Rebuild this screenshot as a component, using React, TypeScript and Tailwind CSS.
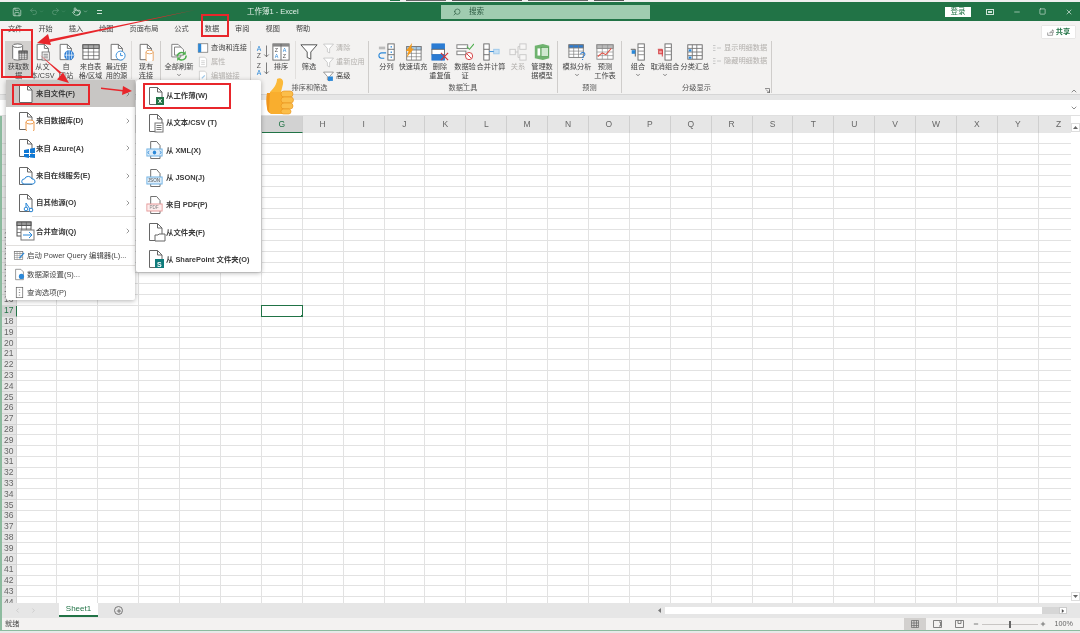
import type { ReactNode } from "react";
import { ChevronDown, ChevronRight, ChevronUp, Minus, Plus, Pointer, Redo2, Save, Search, Square, Undo2, X } from "lucide-react";

const Ico = ({ s = 20, children }: { s?: number; children: ReactNode }) => (
  <svg width={s} height={s} viewBox="0 0 20 20" className="shrink-0">
    {children}
  </svg>
);

const Page = () => (
  <>
    <path d="M3.5 1.5h8l4.5 4.5v12.5h-12.5z" fill="#fff" stroke="#666" />
    <path d="M11.5 1.5v4.5h4.5" fill="none" stroke="#666" />
  </>
);

const Can = ({ c = "#666", x = 4, y = 2, w = 11, h = 14 }) => (
  <>
    <path d={`M${x} ${y + 2}v${h}a${w / 2} 2 0 0 0 ${w} 0v-${h}`} fill="#fff" stroke={c} />
    <ellipse cx={x + w / 2} cy={y + 2} rx={w / 2} ry={2} fill="#fff" stroke={c} />
  </>
);

const MiniGrid = ({ x, y, w, h, c = "#666", head = "#fff" }: { x: number; y: number; w: number; h: number; c?: string; head?: string }) => (
  <>
    <rect x={x} y={y} width={w} height={h} fill="#fff" stroke={c} />
    <rect x={x} y={y} width={w} height={h / 4} fill={head} stroke={c} />
    <path d={`M${x + w / 3} ${y}v${h}M${x + (2 * w) / 3} ${y}v${h}M${x} ${y + h / 2}h${w}M${x} ${y + (3 * h) / 4}h${w}`} stroke={c} fill="none" strokeWidth=".7" />
  </>
);

const icons: Record<string, ReactNode> = {
  blank: <Page />,
  getData: (
    <>
      <Can x={3} y={1} w={11} h={14} />
      <MiniGrid x={10} y={9} w={9} h={9} c="#555" head="#888" />
    </>
  ),
  csv: (
    <>
      <Page />
      <rect x="9" y="10" width="8" height="9" fill="#fff" stroke="#777" />
      <path d="M10.5 12.5h5M10.5 14.5h5M10.5 16.5h5" stroke="#777" />
    </>
  ),
  web: (
    <>
      <Page />
      <circle cx="13.5" cy="13.5" r="5.5" fill="#2b7cd3" />
      <path d="M8 13.5h11M13.5 8v11M11 9.5q-1 4 0 8M16 9.5q1 4 0 8" stroke="#fff" strokeWidth=".8" fill="none" />
    </>
  ),
  table: <MiniGrid x={1} y={2} w={18} h={16} c="#555" head="#aaa" />,
  recent: (
    <>
      <Page />
      <circle cx="14" cy="14" r="5" fill="#fff" stroke="#2b88d8" />
      <path d="M14 11v3h2.5" stroke="#2b88d8" fill="none" />
    </>
  ),
  existing: (
    <>
      <Page />
      <Can c="#e8a15f" x={10} y={8} w={8} h={9} />
    </>
  ),
  refresh: (
    <>
      <path d="M2 1.5h7l3 3v11H2z" fill="#fff" stroke="#777" />
      <path d="M5 4.5h7l3 3v6H5z" fill="#fff" stroke="#777" />
      <path d="M8 15a5 5 0 0 1 8.5-3M18 14a5 5 0 0 1-8.5 3.5" fill="none" stroke="#4cae4c" strokeWidth="1.6" />
      <path d="M17.5 9v4h-4zM8 20v-4h4z" fill="#4cae4c" />
    </>
  ),
  sortBox: (
    <>
      <rect x="1" y="1" width="18" height="18" fill="#fff" stroke="#666" />
      <rect x="1" y="1" width="18" height="3" fill="#888" />
      <path d="M10 1v18" stroke="#666" />
      <text x="3" y="10" fontSize="6" fill="#555" fontFamily="Liberation Sans">Z</text>
      <text x="3" y="17" fontSize="6" fill="#2b88d8" fontFamily="Liberation Sans">A</text>
      <text x="12" y="10" fontSize="6" fill="#2b88d8" fontFamily="Liberation Sans">A</text>
      <text x="12" y="17" fontSize="6" fill="#555" fontFamily="Liberation Sans">Z</text>
    </>
  ),
  filter: <path d="M1 2h18l-7 8v8l-4-2v-6z" fill="#fff" stroke="#555" strokeWidth="1.1" />,
  split: (
    <>
      <rect x="1" y="4" width="7" height="3" fill="#bbb" />
      <rect x="11" y="1" width="7" height="18" fill="#fff" stroke="#666" />
      <path d="M11 7h7M11 13h7" stroke="#666" />
      <rect x="14" y="3.5" width="1.5" height="1.5" fill="#2b88d8" />
      <rect x="14" y="9.5" width="1.5" height="1.5" fill="#2b88d8" />
      <rect x="14" y="15" width="1.5" height="1.5" fill="#2b88d8" />
      <path d="M9 11H4a3 3 0 0 0 0 6h3" fill="none" stroke="#2b88d8" strokeWidth="1.2" />
    </>
  ),
  flash: (
    <>
      <MiniGrid x={3} y={4} w={16} h={15} c="#777" head="#a7cdec" />
      <path d="M9 0L2 9h3l-2 7 8-10H8z" fill="#f39c1f" />
    </>
  ),
  dedupe: (
    <>
      <rect x="1" y="1" width="14" height="6" fill="#2b7cd3" stroke="#2b7cd3" />
      <rect x="1" y="7" width="14" height="6" fill="#fff" stroke="#666" />
      <rect x="1" y="13" width="14" height="6" fill="#2b7cd3" stroke="#2b7cd3" />
      <path d="M11 11l8 8M19 11l-8 8" stroke="#d13438" strokeWidth="1.3" />
    </>
  ),
  validate: (
    <>
      <rect x="1" y="2" width="12" height="4" fill="#fff" stroke="#777" />
      <rect x="1" y="9" width="10" height="4" fill="#fff" stroke="#777" />
      <path d="M12 4l3 3 5-6" fill="none" stroke="#4cae4c" strokeWidth="1.2" />
      <circle cx="14.5" cy="14.5" r="4" fill="#fff" stroke="#d13438" />
      <path d="M12 12l5 5" stroke="#d13438" />
    </>
  ),
  merge: (
    <>
      <rect x="2" y="1" width="6" height="18" fill="#fff" stroke="#666" />
      <path d="M2 7h6M2 13h6" stroke="#666" />
      <rect x="13" y="7" width="6" height="5" fill="#c7e0f4" stroke="#9cc8ea" />
      <path d="M8 9.5h5" stroke="#2b88d8" />
    </>
  ),
  relation: (
    <g opacity=".35">
      <rect x="1" y="7" width="6" height="6" fill="#fff" stroke="#777" />
      <rect x="12" y="1" width="7" height="6" fill="#fff" stroke="#777" />
      <rect x="12" y="13" width="7" height="6" fill="#fff" stroke="#777" />
      <path d="M7 10h3M10 4h2M10 16h2M10 4v12" stroke="#777" fill="none" />
    </g>
  ),
  model: (
    <>
      <path d="M2 3l9-2 7 2v14l-7 2-9-2z" fill="#6fb36f" />
      <rect x="9" y="5" width="8" height="10" fill="#cfe8cf" stroke="#3f8f3f" strokeWidth=".6" />
      <path d="M5 6h3v8H5z" fill="#fff" />
    </>
  ),
  whatIf: (
    <>
      <MiniGrid x={1} y={2} w={16} h={14} c="#777" head="#2b7cd3" />
      <text x="13" y="19" fontSize="12" fill="#2b7cd3" fontFamily="Liberation Sans">?</text>
    </>
  ),
  forecast: (
    <>
      <MiniGrid x={1} y={2} w={18} h={16} c="#888" head="#bbb" />
      <path d="M2 15l5-4 4 2 6-7" fill="none" stroke="#e0564a" strokeWidth="1.2" />
    </>
  ),
  group: (
    <>
      <rect x="10" y="1" width="7" height="18" fill="#fff" stroke="#666" />
      <path d="M10 5h7M10 9h7M10 13h7" stroke="#888" />
      <path d="M2 7h5v8" fill="none" stroke="#555" />
      <rect x="3" y="8" width="4" height="4" fill="#2b88d8" />
    </>
  ),
  ungroup: (
    <>
      <rect x="10" y="1" width="7" height="18" fill="#fff" stroke="#666" />
      <path d="M10 5h7M10 9h7M10 13h7" stroke="#888" />
      <path d="M2 7h5v8" fill="none" stroke="#d13438" />
      <rect x="3" y="8" width="4" height="4" fill="#f2a3a3" stroke="#d13438" />
    </>
  ),
  subtotal: (
    <>
      <rect x="2" y="2" width="16" height="16" fill="#fff" stroke="#666" />
      <path d="M7 2v16M12 2v16M2 6h16M2 10h16M2 14h16" stroke="#777" />
      <rect x="3" y="7" width="3" height="2.5" fill="#2b88d8" />
      <rect x="3" y="15" width="3" height="2.5" fill="#2b88d8" />
    </>
  ),
  db: (
    <>
      <Page />
      <Can c="#ed9b4f" x={10} y={9} w={8} h={8} />
    </>
  ),
  azure: (
    <>
      <Page />
      <path d="M8 12l5-1v4H8zM14 10.8l5-1V15h-5zM8 16h5v4l-5-1zM14 16h5v4l-5-.5z" fill="#0f78d4" />
    </>
  ),
  online: (
    <>
      <Page />
      <path d="M8 18a2.5 2.5 0 0 1 .5-5 4 4 0 0 1 7.5 0 2.5 2.5 0 0 1 1 5z" fill="#fff" stroke="#2b88d8" />
    </>
  ),
  other: (
    <>
      <Page />
      <circle cx="10" cy="16" r="1.8" fill="#fff" stroke="#2b88d8" />
      <circle cx="15" cy="17" r="1.8" fill="#fff" stroke="#2b88d8" />
      <path d="M10 14v-4l4 6" fill="none" stroke="#2b88d8" />
    </>
  ),
  merged: (
    <>
      <MiniGrid x={1} y={1} w={14} h={14} c="#555" head="#999" />
      <rect x="5" y="9" width="13" height="10" fill="#fff" stroke="#777" />
      <path d="M7 14h9M13 11l3 3-3 3" fill="none" stroke="#2b88d8" />
    </>
  ),
  excel: (
    <>
      <Page />
      <rect x="10" y="11" width="8" height="8" fill="#217346" />
      <path d="M12.5 13l3 4M15.5 13l-3 4" stroke="#fff" />
    </>
  ),
  xml: (
    <g transform="translate(0 0) scale(.85 1)">
      <path d="M5.500 9V1.500h7l4 4V9M5.500 16v2.500h11V16" fill="#fff" stroke="#666" />
      <rect x="1" y="9" width="18" height="7" fill="#dcecf9" stroke="#6fb1e4" />
      <path d="M4 11l-2 1.500L4 14M16 11l2 1.500L16 14" fill="none" stroke="#2b88d8" />
      <circle cx="10" cy="12.500" r="2" fill="#2b88d8" />
    </g>
  ),
  json: (
    <g transform="translate(0 0) scale(.85 1)">
      <path d="M5.500 9V1.500h7l4 4V9M5.500 16v2.500h11V16" fill="#fff" stroke="#666" />
      <rect x="1" y="9" width="18" height="7" fill="#dcecf9" stroke="#6fb1e4" />
      <text x="2" y="14.500" fontSize="5.500" fill="#555" fontFamily="Liberation Sans">JSON</text>
    </g>
  ),
  pdf: (
    <g transform="translate(0 0) scale(.85 1)">
      <path d="M5.500 9V1.500h7l4 4V9M5.500 16v2.500h11V16" fill="#fff" stroke="#666" />
      <rect x="1" y="9" width="18" height="7" fill="#fdecec" stroke="#e69a9a" />
      <text x="4" y="14.500" fontSize="5.500" fill="#888" fontFamily="Liberation Sans">PDF</text>
    </g>
  ),
  folder: (
    <>
      <Page />
      <path d="M9 13h3l1-1h6v7H9z" fill="#fff" stroke="#666" />
    </>
  ),
  sharepoint: (
    <>
      <Page />
      <rect x="9" y="10" width="9" height="9" fill="#0f7b7b" />
      <text x="11" y="17.5" fontSize="7" fontWeight="bold" fill="#fff" fontFamily="Liberation Sans">S</text>
    </>
  ),
};

const RibbonBtn = ({ icon, lines, w, caret, off }: { icon: string; lines: string[]; w: string; caret?: boolean; off?: boolean }) => (
  <div className={`${w} flex flex-col items-center pt-[2px] shrink-0 ${off ? "text-[#b3b0ad]" : ""}`}>
    <Ico s={18}>{icons[icon]}</Ico>
    <div className="mt-[1px] flex flex-col items-center leading-[9px] whitespace-nowrap">
      {lines.map((l) => (
        <span key={l}>{l}</span>
      ))}
      {caret && <ChevronDown className="w-[6px] h-[6px] mt-[1px]" strokeWidth={2.5} />}
    </div>
  </div>
);

const SmallRow = ({ children, off }: { children: ReactNode; off?: boolean }) => (
  <div className={`h-[14px] flex items-center gap-[2px] whitespace-nowrap ${off ? "text-[#b3b0ad]" : ""}`}>{children}</div>
);

const Group = ({ w, label, children }: { w: string; label: string; children: ReactNode }) => (
  <div className={`${w} shrink-0 h-[52px] mt-[1px] flex flex-col border-r border-[#cfcdcb]`}>
    <div className="flex h-[42px] shrink-0">{children}</div>
    <div className="text-center leading-[10px] text-[#555]">{label}</div>
  </div>
);

const Ribbon = () => (
  <div className="h-[54px] bg-[#f3f2f1] flex text-[7.2px] text-[#444] relative">
    <Group w="w-[161px]" label="获取和转换数据">
      <div className="w-[5px] shrink-0" />
      <RibbonBtn icon="getData" w="w-[27px] h-[37px] bg-[#d2d0ce]" lines={["获取数", "据"]} caret />
      <RibbonBtn icon="csv" w="w-[21px]" lines={["从文", "本/CSV"]} />
      <RibbonBtn icon="web" w="w-[26px]" lines={["自", "网站"]} />
      <RibbonBtn icon="table" w="w-[23px]" lines={["来自表", "格/区域"]} />
      <RibbonBtn icon="recent" w="w-[29px]" lines={["最近使", "用的源"]} />
      <div className="w-px h-[38px] bg-[#dddbd9] shrink-0" />
      <RibbonBtn icon="existing" w="w-[28px]" lines={["现有", "连接"]} />
    </Group>
    <Group w="w-[90px]" label="查询和连接">
      <RibbonBtn icon="refresh" w="w-[36px]" lines={["全部刷新"]} caret />
      <div className="flex flex-col">
        <SmallRow>
          <Ico s={12}>
            <rect x="2" y="3" width="16" height="14" fill="#fff" stroke="#555" />
            <rect x="2" y="3" width="5" height="14" fill="#2b88d8" />
          </Ico>
          查询和连接
        </SmallRow>
        <SmallRow off>
          <Ico s={12}>
            <path d="M4 2h9l3 3v13H4z" fill="#fff" stroke="#bbb" />
            <path d="M7 8h6M7 11h6M7 14h6" stroke="#bbb" />
          </Ico>
          属性
        </SmallRow>
        <SmallRow off>
          <Ico s={12}>
            <path d="M4 2h9l3 3v13H4z" fill="#fff" stroke="#bbb" />
            <path d="M8 14l5-5" stroke="#9cc8ea" strokeWidth="2" />
          </Ico>
          编辑链接
        </SmallRow>
      </div>
    </Group>
    <Group w="w-[118px]" label="排序和筛选">
      <div className="w-[14px] ml-[5px] shrink-0 flex flex-col gap-[2px] pt-[3px]">
        <Ico s={15}>
          <text x="1" y="9" fontSize="9" fill="#2b88d8" fontFamily="Liberation Sans">A</text>
          <text x="1" y="18" fontSize="9" fill="#555" fontFamily="Liberation Sans">Z</text>
          <path d="M14 2v15M11 14l3 3 3-3" fill="none" stroke="#555" />
        </Ico>
        <Ico s={15}>
          <text x="1" y="9" fontSize="9" fill="#555" fontFamily="Liberation Sans">Z</text>
          <text x="1" y="18" fontSize="9" fill="#2b88d8" fontFamily="Liberation Sans">A</text>
          <path d="M14 2v15M11 14l3 3 3-3" fill="none" stroke="#555" />
        </Ico>
      </div>
      <RibbonBtn icon="sortBox" w="w-[22px]" lines={["排序"]} />
      <div className="w-[4px] shrink-0 border-r border-[#e1dfdd] h-[38px]" />
      <RibbonBtn icon="filter" w="w-[26px]" lines={["筛选"]} />
      <div className="flex flex-col ml-[1px]">
        <SmallRow off>
          <Ico s={11}>
            <path d="M1 2h18l-7 8v8l-4-2v-6z" fill="#fff" stroke="#aaa" />
          </Ico>
          清除
        </SmallRow>
        <SmallRow off>
          <Ico s={11}>
            <path d="M1 2h18l-7 8v8l-4-2v-6z" fill="#fff" stroke="#aaa" />
          </Ico>
          重新应用
        </SmallRow>
        <SmallRow>
          <Ico s={11}>
            <path d="M1 2h18l-7 8v8l-4-2v-6z" fill="#fff" stroke="#555" />
            <rect x="9" y="10" width="9" height="8" fill="#2b88d8" />
          </Ico>
          高级
        </SmallRow>
      </div>
    </Group>
    <Group w="w-[189px]" label="数据工具">
      <div className="w-[3px] shrink-0" />
      <RibbonBtn icon="split" w="w-[29px]" lines={["分列"]} />
      <RibbonBtn icon="flash" w="w-[24px]" lines={["快速填充"]} />
      <RibbonBtn icon="dedupe" w="w-[30px]" lines={["删除", "重复值"]} />
      <RibbonBtn icon="validate" w="w-[20px]" lines={["数据验", "证"]} caret />
      <RibbonBtn icon="merge" w="w-[32px]" lines={["合并计算"]} />
      <RibbonBtn icon="relation" w="w-[22px]" lines={["关系"]} off />
      <RibbonBtn icon="model" w="w-[26px]" lines={["管理数", "据模型"]} />
    </Group>
    <Group w="w-[64px]" label="预测">
      <div className="w-[3px] shrink-0" />
      <RibbonBtn icon="whatIf" w="w-[32px]" lines={["模拟分析"]} caret />
      <RibbonBtn icon="forecast" w="w-[24px]" lines={["预测", "工作表"]} />
    </Group>
    <Group w="w-[150px]" label="分级显示">
      <div className="w-[3px] shrink-0" />
      <RibbonBtn icon="group" w="w-[26px]" lines={["组合"]} caret />
      <RibbonBtn icon="ungroup" w="w-[28px]" lines={["取消组合"]} caret />
      <RibbonBtn icon="subtotal" w="w-[32px]" lines={["分类汇总"]} />
      <div className="flex flex-col text-[#c4c2c0] ml-[1px]">
        <SmallRow off>
          <Ico s={10}>
            <path d="M2 5h5M2 10h5M2 15h5M10 10h8" stroke="#bbb" strokeWidth="1.5" />
          </Ico>
          显示明细数据
        </SmallRow>
        <div className="-mt-px">
          <SmallRow off>
            <Ico s={10}>
              <path d="M2 5h5M2 10h5M2 15h5M10 10h8" stroke="#bbb" strokeWidth="1.5" />
            </Ico>
            隐藏明细数据
          </SmallRow>
        </div>
      </div>
    </Group>
    <svg width="5" height="5" viewBox="0 0 5 5" className="absolute left-[765px] top-[48px]">
      <path d="M0 .5h4.500v4.500M1 1.500l3 3M2 4.500h2.500v-2.500" fill="none" stroke="#666" strokeWidth=".7" />
    </svg>
    <ChevronUp className="absolute left-[1070px] top-[47px] w-[8px] h-[8px] text-[#555]" />
  </div>
);

const MenuRow = ({ icon, label, active, arrow }: { icon: string; label: string; active?: boolean; arrow?: boolean }) => (
  <div className={`h-[27.3px] flex items-center pl-[10px] pr-[3px] ${active ? "bg-[#c8c6c4]" : ""}`}>
    <div className="w-[20px] shrink-0">
      <Ico s={20}>{icons[icon]}</Ico>
    </div>
    <span className="font-bold text-[#3a3a3a] whitespace-nowrap">{label}</span>
    {arrow && <ChevronRight className="ml-auto w-[8px] h-[8px] text-[#666]" />}
  </div>
);

const FootRow = ({ icon, label }: { icon: ReactNode; label: string }) => (
  <div className="flex items-center gap-[1px] pl-[7px] h-[18px] whitespace-nowrap text-[#444]">
    <Ico s={13}>{icon}</Ico>
    {label}
  </div>
);

const SourceMenu = () => (
  <div className="absolute left-[6px] top-[80px] w-[129px] h-[220px] bg-white rounded-[2px] shadow-[0_1px_5px_rgba(0,0,0,0.3)] text-[7.4px]">
    <MenuRow icon="blank" label="来自文件(F)" active arrow />
    <MenuRow icon="db" label="来自数据库(D)" arrow />
    <MenuRow icon="azure" label="来自 Azure(A)" arrow />
    <MenuRow icon="online" label="来自在线服务(E)" arrow />
    <MenuRow icon="other" label="自其他源(O)" arrow />
    <div className="h-px bg-[#e1dfdd] ml-[26px]" />
    <MenuRow icon="merged" label="合并查询(Q)" arrow />
    <div className="h-px bg-[#e1dfdd] mb-[1px]" />
    <FootRow
      label="启动 Power Query 编辑器(L)..."
      icon={
        <>
          <MiniGrid x={2} y={4} w={13} h={12} c="#777" />
          <path d="M10 14l7-8" stroke="#2b88d8" strokeWidth="2" />
        </>
      }
    />
    <div className="h-px bg-[#e1dfdd]" />
    <FootRow
      label="数据源设置(S)..."
      icon={
        <>
          <path d="M4 2h8l4 4v12H4z" fill="#fff" stroke="#666" />
          <circle cx="13" cy="13" r="4" fill="#2b88d8" />
        </>
      }
    />
    <FootRow
      label="查询选项(P)"
      icon={
        <>
          <rect x="5" y="2" width="10" height="16" fill="#fff" stroke="#555" />
          <path d="M9 6h2M9 10h2M9 14h2" stroke="#555" />
        </>
      }
    />
  </div>
);

const FileMenu = () => (
  <div className="absolute left-[136px] top-[80px] w-[125px] h-[192px] pt-[2px] bg-white rounded-[2px] shadow-[0_1px_5px_rgba(0,0,0,0.3)] text-[7.4px]">
    <MenuRow icon="excel" label="从工作薄(W)" />
    <MenuRow icon="csv" label="从文本/CSV (T)" />
    <MenuRow icon="xml" label="从 XML(X)" />
    <MenuRow icon="json" label="从 JSON(J)" />
    <MenuRow icon="pdf" label="来自 PDF(P)" />
    <MenuRow icon="folder" label="从文件夹(F)" />
    <MenuRow icon="sharepoint" label="从 SharePoint 文件夹(O)" />
  </div>
);

const COLS = "ABCDEFGHIJKLMNOPQRSTUVWXYZ".split("");
const ROWS = Array.from({ length: 44 }, (_, i) => i + 1);

const Row = ({ r }: { r: number }) => (
  <>
    <div
      className={`flex items-center justify-center border-b border-r border-[#d4d4d4] ${
        r === 17 ? "bg-[#d2d2d2] text-[#217346] border-r-[#217346]" : "bg-[#e6e6e6]"
      }`}
    >
      {r}
    </div>
    {COLS.map((c) => (
      <div key={c} className="relative bg-white border-r border-b border-[#e2e2e2]">
        {r === 17 && c === "G" && (
          <div className="absolute -left-px -top-px -right-px -bottom-px border border-[#217346]">
            <div className="absolute -right-[2px] -bottom-[2px] w-[3px] h-[3px] bg-[#217346]" />
          </div>
        )}
      </div>
    ))}
  </>
);

const Sheet = () => (
  <div className="flex-1 min-h-0 flex border-l-2 border-[#8dbb9f] overflow-hidden">
    <div className="w-[1069px] shrink-0 overflow-hidden">
      <div className="grid grid-cols-[14.5px_repeat(26,40.9px)] grid-rows-[17px] auto-rows-[10.8px] text-[8.5px] text-[#666]">
        <div className="bg-[#e6e6e6] border-r border-[#cfcfcf]" />
        {COLS.map((c) => (
          <div
            key={c}
            className={`flex items-center justify-center border-r border-[#cfcfcf] ${
              c === "G" ? "bg-[#d2d2d2] border-b border-b-[#217346] text-[#217346]" : "bg-[#e6e6e6]"
            }`}
          >
            {c}
          </div>
        ))}
        {ROWS.map((r) => (
          <Row key={r} r={r} />
        ))}
      </div>
    </div>
    <div className="flex-1 bg-white flex flex-col items-stretch pt-[7px] pb-[2px] text-[#666]">
      <div className="h-[9px] flex items-center justify-center border border-[#ddd]">
        <svg width="5" height="3" viewBox="0 0 5 3"><path d="M2.500 0l2.500 3H0z" fill="#666" /></svg>
      </div>
      <div className="flex-1" />
      <div className="h-[9px] flex items-center justify-center border border-[#ddd]">
        <svg width="5" height="3" viewBox="0 0 5 3"><path d="M0 0h5L2.500 3z" fill="#666" /></svg>
      </div>
    </div>
  </div>
);

const Annotations = () => (
  <>
    <div className="absolute left-[1px] top-[29px] w-[32px] h-[49px] border-2 border-[#e8262b]" />
    <div className="absolute left-[201px] top-[14px] w-[28px] h-[23px] border-2 border-[#e8262b]" />
    <div className="absolute left-[12px] top-[84px] w-[78px] h-[21px] border-2 border-[#e8262b]" />
    <div className="absolute left-[143px] top-[83px] w-[88px] h-[26px] border-2 border-[#e8262b]" />
    <svg width="300" height="120" viewBox="0 0 300 120" className="absolute left-0 top-0 pointer-events-none">
      <path d="M195 10L49 39.500l1 2.500z" fill="#e8262b" />
      <path d="M37 43l11-9 3 11z" fill="#e8262b" />
      <path d="M40 55l20 19 1.500-1.500z" fill="#e8262b" />
      <path d="M69 83l-12-3.500 6-7z" fill="#e8262b" />
      <path d="M101 87.500v1.500l22 2.500v-1.500z" fill="#e8262b" />
      <path d="M132 91l-10 4 1-9z" fill="#e8262b" />
    </svg>
    <svg width="34" height="38" viewBox="0 0 34 38" className="absolute left-[264px] top-[77px] pointer-events-none">
      <path d="M13 2c3-2 7 0 6 5l-2 8H6C10 11 13 7 13 2z" fill="#fbb93a" />
      <path d="M3 16h6c-2 6-2 14 1 21-4 0-7-2-7-6-1-5-1-11 0-15z" fill="#f0961c" />
      <path d="M6 15h14v22H9c-3 0-4-2-4-5z" fill="#f9ae2e" />
      <rect x="17" y="14" width="12" height="6" rx="3" fill="#fbbe4a" stroke="#e8911a" strokeWidth=".6" />
      <rect x="17" y="20" width="12.500" height="6" rx="3" fill="#fbbe4a" stroke="#e8911a" strokeWidth=".6" />
      <rect x="17" y="26" width="12" height="6" rx="3" fill="#fbbe4a" stroke="#e8911a" strokeWidth=".6" />
      <rect x="17" y="32" width="10" height="5" rx="2.500" fill="#fbbe4a" stroke="#e8911a" strokeWidth=".6" />
    </svg>
  </>
);

export default function App() {
  return (
    <div className="relative w-[1080px] h-[633px] overflow-hidden flex flex-col bg-white blur-[0.5px] font-['Liberation_Sans','Noto_Sans_CJK_SC',sans-serif]">
      {/* sliver of the page above the window */}
      <div className="h-[2px] bg-[#efefef] flex items-start pl-[390px] gap-[6px]">
        <span className="w-[10px] h-[1px] bg-[#217346]" />
        <span className="w-[40px] h-[1px] bg-[#666]" />
        <span className="w-[70px] h-[1px] bg-[#555]" />
        <span className="w-[60px] h-[1px] bg-[#666]" />
        <span className="w-[30px] h-[1px] bg-[#555]" />
      </div>

      {/* title bar */}
      <div className="h-[19px] bg-[#217346] flex items-center text-[7.5px] text-[#e4f0e9]">
        <div className="w-[247px] shrink-0 flex items-center pl-[12px]">
          <Save className="w-[10px] h-[10px] text-[#cfe3d7]" strokeWidth={1.6} />
          <Undo2 className="w-[9px] h-[9px] ml-[7px] text-[#5f9c7b]" />
          <ChevronDown className="w-[5px] h-[5px] ml-[1px] text-[#5f9c7b]" />
          <Redo2 className="w-[9px] h-[9px] ml-[7px] text-[#5f9c7b]" />
          <ChevronDown className="w-[5px] h-[5px] ml-[1px] text-[#5f9c7b]" />
          <Pointer className="w-[9px] h-[9px] ml-[6px] text-[#cfe3d7]" />
          <ChevronDown className="w-[5px] h-[5px] ml-[2px] text-[#cfe3d7]" />
          <span className="w-[5px] h-[4px] ml-[9px] border-y border-[#cfe3d7]" />
        </div>
        <div className="w-[194px] shrink-0">工作薄1 - Excel</div>
        <div className="w-[209px] shrink-0 h-[14px] bg-[#a0ccb0] flex items-center pl-[12px] gap-[8px] text-[#2d5c43]">
          <Search className="w-[8px] h-[8px] -scale-x-100" />
          搜索
        </div>
        <div className="flex-1" />
        <div className="w-[26px] h-[10px] bg-white text-[#217346] flex items-center justify-center mr-[15px]">登录</div>
        <div className="w-[8px] h-[6px] border border-[#cfe3d7] flex items-center justify-center mr-[19px]">
          <span className="w-[4px] h-[2px] bg-[#cfe3d7]" />
        </div>
        <Minus className="w-[8px] h-[8px] text-[#cfe3d7] mr-[18px]" />
        <Square className="w-[7px] h-[7px] text-[#e4f0e9] mr-[19px]" />
        <X className="w-[8px] h-[8px] text-[#e4f0e9] mr-[7px]" />
      </div>

      {/* tabs */}
      <div className="h-[19px] bg-[#f3f2f1] flex items-center justify-between text-[7.2px] text-[#444] pl-[8px] pr-[5px]">
        <div className="flex gap-[16px] pb-[3px]">
          {["文件", "开始", "插入", "绘图", "页面布局", "公式", "数据", "审阅", "视图", "帮助"].map((t) => (
            <span key={t}>{t}</span>
          ))}
        </div>
        <div className="w-[33px] h-[12px] mt-[3px] bg-white flex items-center justify-center gap-[2px] text-[#217346] font-bold shadow-[0_0_1px_rgba(0,0,0,0.25)]">
          <svg width="7" height="7" viewBox="0 0 10 10"><path d="M1 5v4h7V6M4 6c0-2 2-3 4-3V1l2 3-2 2V5C6 5 5 5 4 6z" fill="none" stroke="#777" /></svg>
          共享
        </div>
      </div>

      <Ribbon />
      <div className="h-[6px] bg-[#e6e6e6] border-t border-[#d6d6d6]" />

      {/* formula bar */}
      <div className="h-[16px] bg-white border-b border-[#e0e0e0] flex items-center justify-end pr-[2px]">
        <ChevronDown className="w-[8px] h-[8px] text-[#555]" />
      </div>

      <Sheet />

      {/* sheet tabs */}
      <div className="h-[15px] bg-[#e6e6e6] border-l-2 border-[#8dbb9f] flex items-start text-[8px]">
        <ChevronRight className="w-[7px] h-[7px] mt-[4px] ml-[12px] rotate-180 text-[#bbb]" />
        <ChevronRight className="w-[7px] h-[7px] mt-[4px] ml-[9px] text-[#bbb]" />
        <div className="ml-[22px] w-[39px] h-[14px] bg-white border-b-2 border-[#217346] text-[#217346] flex items-center justify-center">Sheet1</div>
        <div className="ml-[16px] mt-[3px] w-[9px] h-[9px] rounded-full border border-[#777] flex items-center justify-center">
          <Plus className="w-[6px] h-[6px] text-[#555]" strokeWidth={3} />
        </div>
        <div className="ml-[534px] mt-[4px] flex items-center h-[7px]">
          <svg width="5" height="5" viewBox="0 0 5 5" className="mr-[3px]"><path d="M4 0v5L1 2.500z" fill="#777" /></svg>
          <div className="w-[377px] h-[7px] bg-white" />
          <div className="w-[17px] h-[7px] bg-[#d6d6d6]" />
          <div className="w-[8px] h-[7px] bg-white border border-[#ccc] flex items-center justify-center">
            <svg width="4" height="4" viewBox="0 0 5 5"><path d="M1 0v5l3-2.500z" fill="#555" /></svg>
          </div>
        </div>
      </div>

      {/* status bar */}
      <div className="h-[12px] bg-[#f3f2f1] border-l-2 border-[#8dbb9f] flex items-center text-[7.2px] text-[#444] pl-[3px]">
        <span>就绪</span>
        <div className="ml-[885px] w-[22px] h-[12px] bg-[#d2d0ce] flex items-center justify-center">
          <svg width="8" height="8" viewBox="0 0 8 8"><path d="M.5.500h7v7h-7zM3 .5v7M5.500.5v7M.5 3h7M.5 5.500h7" fill="none" stroke="#666" strokeWidth=".7" /></svg>
        </div>
        <svg width="9" height="8" viewBox="0 0 9 8" className="ml-[7px]"><path d="M.5.500h8v7h-8zM6 2h1.500v4H6" fill="none" stroke="#666" strokeWidth=".8" /></svg>
        <svg width="9" height="8" viewBox="0 0 9 8" className="ml-[13px]"><path d="M.5.500h8v7h-8zM3 .5v3h3v-3" fill="none" stroke="#666" strokeWidth=".8" /></svg>
        <Minus className="w-[6px] h-[6px] ml-[9px] text-[#555]" strokeWidth={3} />
        <div className="relative ml-[3px] w-[56px] h-px bg-[#c8c6c4]">
          <span className="absolute left-[27px] -top-[3px] w-[2px] h-[7px] bg-[#666]" />
        </div>
        <Plus className="w-[6px] h-[6px] ml-[2px] text-[#555]" strokeWidth={3} />
        <span className="ml-[8px] text-[#666]">100%</span>
      </div>
      <div className="h-[3px] bg-[#8dbb9f] border-b-2 border-[#e8e8e8]" />

      <SourceMenu />
      <FileMenu />
      <Annotations />
    </div>
  );
}
